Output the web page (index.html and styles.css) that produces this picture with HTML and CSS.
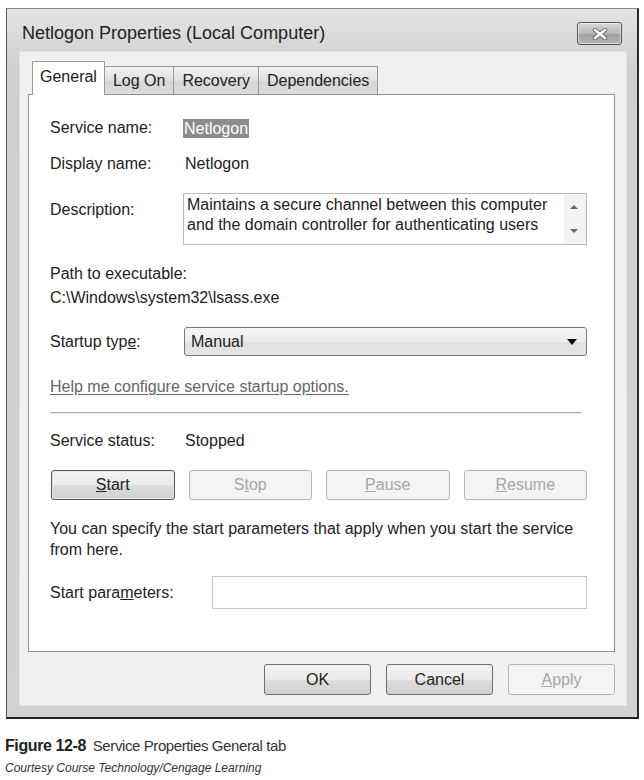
FILE: index.html
```html
<!DOCTYPE html>
<html lang="en">
<head>
  <meta charset="UTF-8" />
  <title>Netlogon Properties</title>
  <link rel="stylesheet" href="styles.css">
</head>
<body>

  <div class="window">
    <div class="titlebar">
      <span class="title">Netlogon Properties (Local Computer)</span>
      <button class="close" type="button" aria-label="Close">
        <svg width="16" height="12" viewBox="0 0 16 12">
          <path d="M3 2 L13 10 M13 2 L3 10" stroke="#6a6a6a" stroke-width="4.5" stroke-linecap="round" />
          <path d="M3 2 L13 10 M13 2 L3 10" stroke="#fff" stroke-width="2.6" stroke-linecap="round" />
        </svg>
      </button>
    </div>

    <div class="client">
      <div class="tabs">
        <div class="tab active">General</div>
        <div class="tab">Log On</div>
        <div class="tab">Recovery</div>
        <div class="tab">Dependencies</div>
      </div>

      <div class="panel">
        <div class="row">
          <span class="label">Service name:</span>
          <span class="selected">Netlogon</span>
        </div>
        <div class="row gap16">
          <span class="label">Display name:</span>
          <span>Netlogon</span>
        </div>
        <div class="row desc-row">
          <span class="label desc-label">Description:</span>
          <div class="desc">
            <p>Maintains a secure channel between this computer and the domain controller for authenticating users</p>
            <div class="scroll">
              <span class="arrow up"></span>
              <span class="arrow down"></span>
            </div>
          </div>
        </div>

        <div class="path">
          <div>Path to executable:</div>
          <div>C:\Windows\system32\lsass.exe</div>
        </div>

        <div class="row startup">
          <span class="label">Startup typ<u>e</u>:</span>
          <div class="select">
            <span>Manual</span>
            <span class="caret"></span>
          </div>
        </div>

        <a class="help" href="#">Help me configure service startup options.</a>
        <div class="sep"></div>

        <div class="row status">
          <span class="label">Service status:</span>
          <span>Stopped</span>
        </div>

        <div class="actions">
          <button class="btn default" type="button"><u>S</u>tart</button>
          <button class="btn" type="button" disabled>S<u>t</u>op</button>
          <button class="btn" type="button" disabled><u>P</u>ause</button>
          <button class="btn" type="button" disabled><u>R</u>esume</button>
        </div>

        <p class="note">You can specify the start parameters that apply when you start the service from here.</p>

        <div class="row params">
          <span class="label params-label">Start para<u>m</u>eters:</span>
          <input type="text" class="params-input" />
        </div>
      </div>

      <div class="footer">
        <button class="btn" type="button">OK</button>
        <button class="btn" type="button">Cancel</button>
        <button class="btn" type="button" disabled><u>A</u>pply</button>
      </div>
    </div>
  </div>

  <div class="caption">
    <b>Figure 12-8</b> Service Properties General tab
  </div>
  <div class="credit">Courtesy Course Technology/Cengage Learning</div>

</body>
</html>
```

FILE: styles.css
```css
body {
  margin: 0;
  background-color: #fff;
  font-family: 'Liberation Sans', Arial, sans-serif;
  color: #222;
}
.window {
  width: 633px;
  margin: 8px 0 0 6px;
  box-sizing: border-box;
  border: 1px solid #555;
  border-top-color: #8a8a8a;
  border-right: 2px solid #2a2a2a;
  border-bottom: 2px solid #1e1e1e;
  padding: 0 11px 12px 13px;
  background: linear-gradient(#e4e4e4, #cfcfcf 60px, #d2d2d2);
}
.titlebar {
  height: 43px;
  display: flex;
  align-items: center;
  justify-content: space-between;
  padding: 0 4px 0 2px;
}
.title {
  font-size: 18px;
  color: #222;
  margin-top: 6px;
}
.close {
  width: 45px;
  height: 23px;
  margin-top: 6px;
  border: 1px solid #555;
  border-radius: 3px;
  background: linear-gradient(#d8d8d8, #b8b8b8 50%, #a0a0a0 51%, #b4b4b4);
  box-shadow: inset 0 0 0 1px rgba(255,255,255,0.5);
  display: flex;
  align-items: center;
  justify-content: center;
  padding: 0;
}
.client {
  background-color: #f0f0f0;
  box-shadow: 0 0 0 1px #e2e2e2;
  padding: 10px 11px 10px 8px;
  font-size: 16px;
}
.tabs {
  display: flex;
  align-items: flex-end;
  height: 32px;
  padding-left: 4px;
}
.tab {
  height: 27px;
  line-height: 27px;
  padding: 0 8px;
  border: 1px solid #999;
  border-bottom: none;
  margin-left: -1px;
  background: linear-gradient(#f2f2f2, #e0e0e0 50%, #d6d6d6 51%, #dcdcdc);
  color: #222;
}
.tab:first-child {
  margin-left: 0;
}
.tab.active {
  height: 33px;
  line-height: 30px;
  margin-bottom: -1px;
  background: #fff;
  position: relative;
  z-index: 1;
  padding: 0 7px;
}
.panel {
  height: 558px;
  box-sizing: border-box;
  background-color: #fff;
  border: 1px solid #8e9299;
  padding: 23px 27px 0 21px;
}
.row {
  display: flex;
  align-items: center;
  height: 20px;
}
.label {
  width: 135px;
  flex-shrink: 0;
}
.selected {
  background-color: #8c8c8c;
  color: #fff;
  padding: 0 1px;
  margin-left: -2px;
  line-height: 19px;
}
.gap16 {
  margin-top: 16px;
}
.desc-row {
  margin-top: 19px;
  height: 52px;
  align-items: flex-start;
}
.desc-label {
  margin-top: 8px;
}
.desc {
  flex: 1;
  height: 52px;
  margin-left: -2px;
  border: 1px solid #bbb;
  box-sizing: border-box;
  display: flex;
}
.desc p {
  margin: 0;
  padding: 1px 8px 0 3px;
  line-height: 20px;
  flex: 1;
}
.scroll {
  width: 22px;
  background-color: #f3f3f3;
  position: relative;
}
.arrow {
  position: absolute;
  left: 6px;
  width: 0;
  height: 0;
  border-left: 4px solid transparent;
  border-right: 4px solid transparent;
}
.arrow.up {
  top: 11px;
  border-bottom: 4px solid #666;
}
.arrow.down {
  top: 35px;
  border-top: 4px solid #666;
}
.path {
  margin-top: 17px;
  line-height: 24px;
}
.startup {
  margin-top: 17px;
  height: 29px;
}
.select {
  flex: 1;
  height: 29px;
  margin-left: -1px;
  box-sizing: border-box;
  border: 1px solid #777;
  border-radius: 3px;
  background: linear-gradient(#f6f6f6, #ececec 50%, #e0e0e0 51%, #e6e6e6);
  display: flex;
  align-items: center;
  justify-content: space-between;
  padding: 0 9px 0 6px;
}
.caret {
  width: 0;
  height: 0;
  border-left: 5px solid transparent;
  border-right: 5px solid transparent;
  border-top: 6px solid #111;
}
.help {
  display: block;
  margin-top: 21px;
  line-height: 20px;
  color: #666;
  text-decoration: underline;
  text-underline-offset: 2px;
}
.sep {
  margin-top: 15px;
  width: 531px;
  height: 1px;
  background-color: #a8a8a8;
  box-shadow: 0 1px 0 #eee;
}
.status {
  margin-top: 18px;
}
.actions {
  display: grid;
  grid-template-columns: repeat(4, 1fr);
  gap: 14px;
  margin-top: 19px;
  padding-left: 1px;
}
.btn {
  height: 30px;
  border: 1px solid #707070;
  border-radius: 3px;
  background: linear-gradient(#f3f3f3, #ebebeb 50%, #dddddd 51%, #d0d0d0);
  font-family: 'Liberation Sans', Arial, sans-serif;
  font-size: 16px;
  color: #222;
  padding: 0;
}
.btn.default {
  border-color: #555;
  box-shadow: inset 0 0 0 1px #e8e8e8;
}
.btn:disabled {
  border-color: #b4b4b4;
  background: #f4f4f4;
  color: #a6a6a6;
}
.note {
  margin: 18px 0 0;
  line-height: 21px;
}
.params {
  margin-top: 16px;
  height: 33px;
}
.params-label {
  width: 162px;
}
.params-input {
  flex: 1;
  height: 33px;
  box-sizing: border-box;
  border: 1px solid #c8c8c8;
  margin: 0;
}
.footer {
  display: flex;
  justify-content: flex-end;
  gap: 15px;
  margin-top: 12px;
}
.footer .btn {
  width: 107px;
  height: 31px;
}
.caption {
  margin: 18px 0 0 5px;
  font-size: 15px;
  color: #333;
  letter-spacing: -0.4px;
}
.caption b {
  font-size: 16px;
  color: #222;
  margin-right: 3px;
}
.credit {
  margin: 6px 0 0 5px;
  font-size: 12px;
  font-style: italic;
  color: #333;
}
```
